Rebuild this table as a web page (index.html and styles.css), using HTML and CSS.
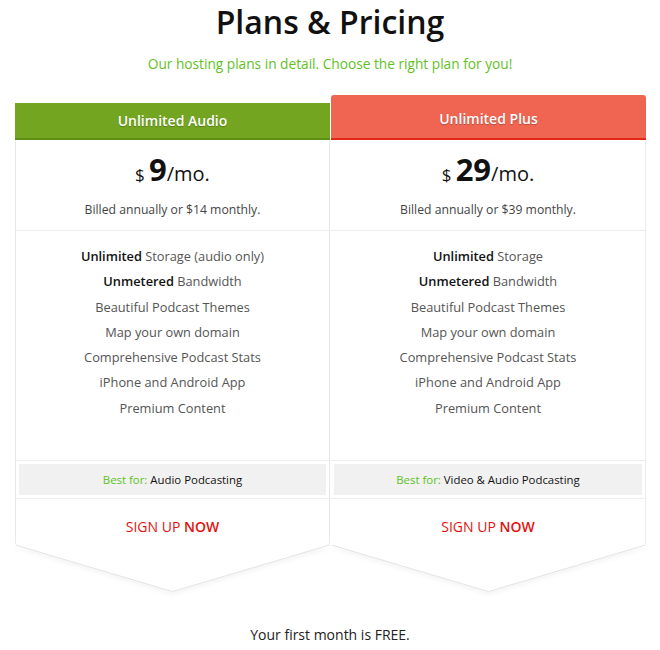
FILE: index.html
```html
<!DOCTYPE html>
<html lang="en">
<head>
<meta charset="utf-8">
<title>Plans &amp; Pricing</title>
<link rel="stylesheet" href="styles.css">
</head>
<body>
<main class="page">
  <h1 class="title">Plans &amp; Pricing</h1>
  <p class="subtitle">Our hosting plans in detail. Choose the right plan for you!</p>

  <section class="plans">
    <article class="plan plan-audio">
      <header class="plan-head">Unlimited Audio</header>
      <div class="plan-body">
        <div class="plan-price">
          <div class="price"><span class="cur">$</span> <span class="amount">9</span><span class="per">/mo.</span></div>
          <div class="billed">Billed annually or $14 monthly.</div>
        </div>
        <ul class="features">
          <li><b>Unlimited</b> Storage (audio only)</li>
          <li><b>Unmetered</b> Bandwidth</li>
          <li>Beautiful Podcast Themes</li>
          <li>Map your own domain</li>
          <li>Comprehensive Podcast Stats</li>
          <li>iPhone and Android App</li>
          <li>Premium Content</li>
        </ul>
        <div class="bestfor-row"><div class="bestfor"><span class="bf-label">Best for:</span> Audio Podcasting</div></div>
        <div class="signup"><a href="#">SIGN UP <span class="now">NOW</span></a></div>
      </div>
      <svg class="chevron" viewBox="0 0 315 48" width="315" height="48">
        <polygon points="0,0 157.5,46.5 315,0" fill="#fff"/>
        <polyline points="0.5,0 157.5,46.5 314.5,0" fill="none" stroke="#e4e4e4" stroke-width="1"/>
      </svg>
    </article>

    <article class="plan plan-plus">
      <header class="plan-head">Unlimited Plus</header>
      <div class="plan-body">
        <div class="plan-price">
          <div class="price"><span class="cur">$</span> <span class="amount">29</span><span class="per">/mo.</span></div>
          <div class="billed">Billed annually or $39 monthly.</div>
        </div>
        <ul class="features">
          <li><b>Unlimited</b> Storage</li>
          <li><b>Unmetered</b> Bandwidth</li>
          <li>Beautiful Podcast Themes</li>
          <li>Map your own domain</li>
          <li>Comprehensive Podcast Stats</li>
          <li>iPhone and Android App</li>
          <li>Premium Content</li>
        </ul>
        <div class="bestfor-row"><div class="bestfor"><span class="bf-label">Best for:</span> Video &amp; Audio Podcasting</div></div>
        <div class="signup"><a href="#">SIGN UP <span class="now">NOW</span></a></div>
      </div>
      <svg class="chevron" viewBox="0 0 315 48" width="315" height="48">
        <polygon points="0,0 157.5,46.5 315,0" fill="#fff"/>
        <polyline points="0.5,0 157.5,46.5 314.5,0" fill="none" stroke="#e4e4e4" stroke-width="1"/>
      </svg>
    </article>
  </section>

  <p class="footnote">Your first month is FREE.</p>
</main>
</body>
</html>
```

FILE: styles.css
```css
* { box-sizing: border-box; }

html, body {
  margin: 0;
  padding: 0;
  background: #fff;
}

body {
  font-family: "Open Sans", "Liberation Sans", Arial, sans-serif;
  color: #555;
}

.page {
  width: 660px;
  padding: 0 15px;
}

.title {
  margin: 0;
  padding-top: 2px;
  font-size: 32px;
  line-height: 40px;
  font-weight: 600;
  color: #111;
  text-align: center;
}

.subtitle {
  margin: 11px 0 0;
  font-size: 13.7px;
  line-height: 22px;
  font-weight: 400;
  color: #62c11f;
  text-align: center;
}

.plans {
  display: flex;
  align-items: flex-start;
  margin-top: 20px;
}

.plan {
  width: 315px;
  display: flex;
  flex-direction: column;
  text-align: center;
}

.plan-audio {
  margin-top: 8px;
}

.plan-plus {
  margin-left: 1px;
}

.plan-body {
  border-left: 1px solid #e8e8e8;
  border-bottom-left-radius: 3px;
  border-bottom-right-radius: 3px;
}

.plan-audio .plan-body {
  border-right: 1px solid #e8e8e8;
}

.plan-plus .plan-body {
  border-left: 0;
  border-right: 1px solid #ececec;
}

.plan-head {
  color: #fff;
  font-weight: 600;
  font-size: 14px;
  text-shadow: 0 1px 1px rgba(0,0,0,0.25);
}

.plan-audio .plan-head {
  background: #74a520;
  border-bottom: 2px solid #5c8f14;
  height: 37px;
  line-height: 35px;
}

.plan-plus .plan-head {
  background: #ef6551;
  border-bottom: 2px solid #e32716;
  border-radius: 3px 3px 0 0;
  height: 45px;
  line-height: 47px;
}

.plan-price {
  height: 91px;
  border-bottom: 1px solid #eeeeee;
  padding-top: 11px;
}

.price {
  color: #111;
  line-height: 36px;
  height: 36px;
}

.cur {
  font-size: 17px;
}

.amount {
  font-size: 31px;
  font-weight: 700;
}

.per {
  font-size: 20px;
}

.billed {
  margin-top: 14px;
  font-size: 12.2px;
  line-height: 18px;
  color: #444;
}

.features {
  list-style: none;
  margin: 0;
  padding: 13px 0 0;
  height: 230px;
  border-bottom: 1px solid #eeeeee;
}

.features li {
  font-size: 12.8px;
  line-height: 25.3px;
  color: #555;
}

.features b {
  font-weight: 600;
  color: #111;
}

.bestfor-row {
  padding: 3px;
  border-bottom: 1px solid #eeeeee;
}

.bestfor {
  background: #f1f1f1;
  height: 31px;
  line-height: 31px;
  font-size: 11.4px;
  color: #111;
}

.bf-label {
  color: #5cc21b;
}

.signup {
  height: 46px;
  padding-top: 18px;
  font-size: 14px;
  line-height: 20px;
}

.signup a {
  color: #e3120f;
  text-decoration: none;
}

.now {
  font-weight: 600;
}

.chevron {
  display: block;
  width: 315px;
  height: 48px;
  filter: drop-shadow(0 3px 2px rgba(0, 0, 0, 0.04));
}

.footnote {
  margin: 32px 0 0;
  text-align: center;
  font-size: 14px;
  line-height: 20px;
  color: #222;
}
```
